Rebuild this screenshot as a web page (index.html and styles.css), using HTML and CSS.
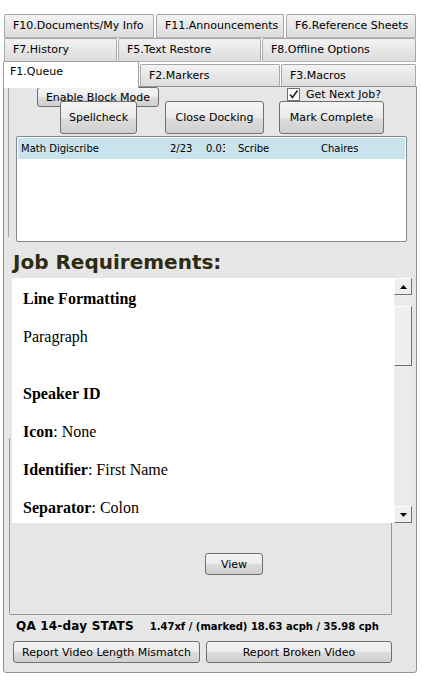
FILE: index.html
```html
<!DOCTYPE html>
<html>
<head>
<meta charset="utf-8">
<link rel="stylesheet" href="styles.css">
</head>
<body>
<div class="tabs">
  <div class="tabrow r1">
    <div class="tab w150">F10.Documents/My Info</div>
    <div class="tab w128">F11.Announcements</div>
    <div class="tab w130">F6.Reference Sheets</div>
  </div>
  <div class="tabrow r2">
    <div class="tab w113">F7.History</div>
    <div class="tab w143">F5.Text Restore</div>
    <div class="tab w154">F8.Offline Options</div>
  </div>
  <div class="tabrow r3">
    <div class="tab sel">F1.Queue</div>
    <div class="tab w140 low">F2.Markers</div>
    <div class="tab w135 low">F3.Macros</div>
  </div>
</div>
<div class="panel">
  <div class="edge"></div>
  <div class="toprow">
    <button class="btn block">Enable Block Mode</button>
    <label class="chk"><span class="box"><svg width="11" height="11" viewBox="0 0 11 11"><path d="M2 5.5 L4.5 8.5 L9.5 1.5" fill="none" stroke="#222" stroke-width="1.6"/></svg></span>Get Next Job?</label>
  </div>
  <div class="btnrow">
    <button class="btn big spell">Spellcheck</button>
    <button class="btn big dock">Close Docking</button>
    <button class="btn big mark">Mark Complete</button>
  </div>
  <div class="list">
    <div class="row">
      <span class="c1">Math Digiscribe</span>
      <span class="c2">2/23</span>
      <span class="c3">0.03:</span>
      <span class="c4">Scribe</span>
      <span class="c5">Chaires</span>
    </div>
  </div>
  <h2 class="jobh">Job Requirements:</h2>
  <div class="req">
    <div class="reqtext">
      <p><b>Line Formatting</b></p>
      <p>Paragraph</p>
      <p class="gap"><b>Speaker ID</b></p>
      <p><b>Icon</b>: None</p>
      <p><b>Identifier</b>: First Name</p>
      <p><b>Separator</b>: Colon</p>
    </div>
    <div class="sbar">
      <div class="sbtn"><svg width="7" height="4" viewBox="0 0 7 4"><path d="M0 4 L3.5 0 L7 4Z" fill="#000"/></svg></div>
      <div class="track t1"></div>
      <div class="thumb"></div>
      <div class="track t2"></div>
      <div class="sbtn"><svg width="7" height="4" viewBox="0 0 7 4"><path d="M0 0 L3.5 4 L7 0Z" fill="#000"/></svg></div>
    </div>
  </div>
  <div class="viewbox">
    <button class="btn view">View</button>
  </div>
  <div class="stats">
    <span class="qa">QA 14-day STATS</span>
    <span class="nums">1.47xf / (marked) 18.63 acph / 35.98 cph</span>
  </div>
  <div class="reports">
    <button class="btn rep r1b">Report Video Length Mismatch</button>
    <button class="btn rep r2b">Report Broken Video</button>
  </div>
</div>
</body>
</html>
```
FILE: styles.css
```css
html, body {
  margin: 0;
  padding: 0;
  background: #ffffff;
  font-family: "DejaVu Sans", Verdana, sans-serif;
  font-size: 11px;
  color: #000;
}
.tabs {
  padding-top: 14px;
  width: 423px;
}
.tabrow {
  display: flex;
  height: 24px;
}
.r1 { margin-left: 4px; gap: 2px; }
.r2 { margin-left: 4px; gap: 1px; }
.r3 { margin-left: 3px; gap: 1px; height: 25px; align-items: flex-start; }
.tab {
  box-sizing: border-box;
  height: 24px;
  border: 1px solid #a7a7a7;
  border-bottom-color: #b5b5b5;
  border-radius: 2px 2px 0 0;
  background: linear-gradient(#f3f3f3, #e7e7e7 50%, #dcdcdc);
  padding-left: 8px;
  line-height: 22px;
  white-space: nowrap;
  overflow: hidden;
}
.w150 { width: 150px; }
.w128 { width: 128px; }
.w130 { width: 130px; }
.w113 { width: 113px; }
.w143 { width: 143px; }
.w154 { width: 154px; }
.w140 { width: 140px; }
.w135 { width: 135px; }
.tab.low { margin-top: 2px; height: 23px; line-height: 21px; }
.tab.sel {
  width: 136px;
  height: 27px;
  background: #ffffff;
  border-color: #a0a0a0;
  border-bottom: none;
  padding-left: 6px;
  line-height: 19px;
  position: relative;
  z-index: 2;
  margin-top: -1px;
}
.panel {
  position: relative;
  box-sizing: border-box;
  margin-left: 3px;
  width: 414px;
  height: 587px;
  margin-top: -1px;
  border: 1px solid #8a96a2;
  border-radius: 0 0 3px 3px;
  background: #e6e6e6;
}
.edge {
  position: absolute;
  left: 4px;
  top: 0;
  width: 1px;
  height: 150px;
  background: #9aa3ab;
}
.btn {
  font-family: "DejaVu Sans", Verdana, sans-serif;
  font-size: 11px;
  color: #000;
  box-sizing: border-box;
  border: 1px solid #707070;
  border-radius: 3px;
  background: linear-gradient(#f4f4f4, #ebebeb 50%, #dddddd 51%, #cfcfcf);
  padding: 0;
  margin: 0;
  white-space: nowrap;
}
.toprow {
  display: flex;
  align-items: flex-start;
  height: 20px;
}
.block {
  margin-left: 33px;
  width: 122px;
  height: 20px;
  position: relative;
  z-index: 0;
}
.chk {
  margin-left: 128px;
  display: flex;
  align-items: center;
  gap: 6px;
  font-size: 11px;
  line-height: 13px;
  margin-top: 1px;
}
.box {
  width: 11px;
  height: 11px;
  border: 1px solid #707070;
  background: #fff;
  display: inline-flex;
}
.btnrow {
  display: flex;
  position: relative;
  z-index: 1;
  margin-top: -6px;
  height: 33px;
}
.big { height: 33px; }
.spell { margin-left: 56px; width: 77px; }
.dock { margin-left: 28px; width: 99px; }
.mark { margin-left: 15px; width: 105px; }
.list {
  margin: 2px 0 0 12px;
  width: 391px;
  height: 106px;
  box-sizing: border-box;
  border: 1px solid #828790;
  border-radius: 2px;
  background: #fff;
  padding: 1px;
}
.row {
  position: relative;
  height: 21px;
  background: #c9e3ed;
  font-size: 10px;
  line-height: 21px;
}
.row span { position: absolute; top: 0; }
.c1 { left: 3px; }
.c2 { left: 152px; }
.c3 { left: 188px; width: 19px; overflow: hidden; }
.c4 { left: 220px; }
.c5 { left: 303px; }
.jobh {
  margin: 7px 0 0 9px;
  font-family: "DejaVu Sans", Verdana, sans-serif;
  font-size: 20px;
  font-weight: bold;
  color: #2d2b10;
  line-height: 27px;
  height: 27px;
}
.req {
  position: relative;
  z-index: 1;
  margin: 2px 0 0 8px;
  width: 400px;
  height: 245px;
  display: flex;
}
.reqtext {
  flex: 1;
  background: #fff;
  font-family: "Liberation Serif", "Times New Roman", serif;
  font-size: 16px;
  padding: 0 0 0 11px;
  overflow: hidden;
}
.reqtext p {
  margin: 0;
  height: 38px;
  line-height: 18px;
  padding-top: 12px;
  box-sizing: border-box;
}
.reqtext p.gap { margin-top: 19px; }
.sbar {
  width: 18px;
  display: flex;
  flex-direction: column;
  background-color: #f4f4f4;
  background-image: linear-gradient(45deg, #e2e2e2 25%, transparent 25%, transparent 75%, #e2e2e2 75%), linear-gradient(45deg, #e2e2e2 25%, transparent 25%, transparent 75%, #e2e2e2 75%);
  background-size: 2px 2px;
  background-position: 0 0, 1px 1px;
}
.sbtn {
  height: 17px;
  box-sizing: border-box;
  border: 1px solid;
  border-color: #ffffff #707070 #707070 #ffffff;
  background: #efefef;
  display: flex;
  align-items: center;
  justify-content: center;
}
.t1 { height: 11px; }
.thumb {
  height: 60px;
  box-sizing: border-box;
  border: 1px solid;
  border-color: #ffffff #707070 #707070 #ffffff;
  background: #efefef;
}
.t2 { flex: 1; }
.viewbox {
  box-sizing: border-box;
  margin: -85px 0 0 5px;
  width: 383px;
  height: 177px;
  border: 1px solid #8a96a2;
  border-top: none;
  border-radius: 0 0 2px 2px;
  padding: 115px 0 0 195px;
}
.view {
  width: 58px;
  height: 22px;
}
.stats {
  display: flex;
  align-items: baseline;
  margin: 4px 0 0 12px;
  height: 18px;
}
.qa {
  font-weight: bold;
  font-size: 12px;
  letter-spacing: 0.2px;
}
.nums {
  margin-left: 16px;
  font-weight: bold;
  font-size: 10px;
}
.reports {
  display: flex;
  gap: 6px;
  margin: 4px 0 0 9px;
}
.rep { height: 22px; }
.r1b { width: 187px; }
.r2b { width: 186px; }
```
